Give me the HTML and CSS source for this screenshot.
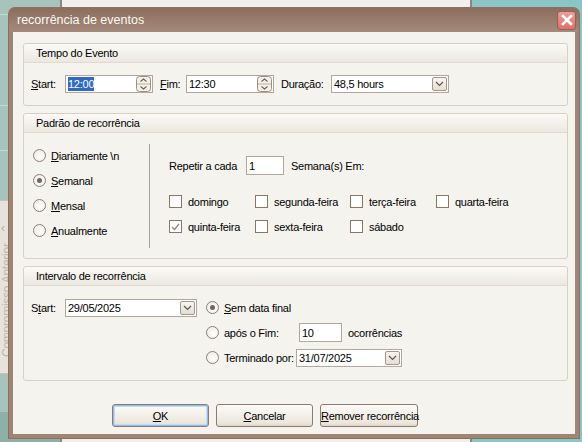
FILE: index.html
```html
<!DOCTYPE html>
<html lang="pt">
<head>
  <meta charset="UTF-8" />
  <title>recorrência de eventos</title>
  <link rel="stylesheet" href="styles.css">
</head>
<body>
  <div class="backdrop">
    <div class="bg-left">
      <div class="prev-tab"><span class="prev-arrow">&lsaquo;</span><span class="prev-text">Compromisso Anterior</span></div>
    </div>
    <div class="bg-main"></div>
    <div class="bg-right"></div>
  </div>

  <div class="dialog">
    <div class="titlebar">
      <span class="title">recorrência de eventos</span>
      <span class="close">
        <svg width="12" height="12" viewBox="0 0 12 12"><path d="M2 2 L10 10 M10 2 L2 10" stroke="#fff" stroke-width="2.6" stroke-linecap="square"/></svg>
      </span>
    </div>

    <div class="body">
      <div class="group g-time">
        <div class="group-head">Tempo do Evento</div>
        <div class="time-row">
          <label class="lbl-start"><u>S</u>tart:</label>
          <div class="field spin">
            <span class="value"><span class="sel">12:00</span></span>
            <svg class="spin-icon" width="15" height="16" viewBox="0 0 15 16">
              <rect x="0.5" y="0.5" width="14" height="15" rx="3" fill="#f3f0ea" stroke="#9c8f82"/>
              <line x1="1" y1="8" x2="14" y2="8" stroke="#b8aea2"/>
              <path d="M4.5 5.5 L7.5 3 L10.5 5.5" fill="none" stroke="#6d6156" stroke-width="1.1"/>
              <path d="M4.5 10.5 L7.5 13 L10.5 10.5" fill="none" stroke="#6d6156" stroke-width="1.1"/>
            </svg>
          </div>
          <label class="lbl-fim"><u>F</u>im:</label>
          <div class="field spin">
            <span class="value">12:30</span>
            <svg class="spin-icon" width="15" height="16" viewBox="0 0 15 16">
              <rect x="0.5" y="0.5" width="14" height="15" rx="3" fill="#f3f0ea" stroke="#9c8f82"/>
              <line x1="1" y1="8" x2="14" y2="8" stroke="#b8aea2"/>
              <path d="M4.5 5.5 L7.5 3 L10.5 5.5" fill="none" stroke="#6d6156" stroke-width="1.1"/>
              <path d="M4.5 10.5 L7.5 13 L10.5 10.5" fill="none" stroke="#6d6156" stroke-width="1.1"/>
            </svg>
          </div>
          <label class="lbl-dur">Duração:</label>
          <div class="field combo dur">
            <span class="value">48,5 hours</span>
            <span class="drop"><svg width="9" height="6" viewBox="0 0 9 6"><path d="M1 1 L4.5 4.5 L8 1" fill="none" stroke="#5e554c" stroke-width="1.2"/></svg></span>
          </div>
        </div>
      </div>

      <div class="group g-pattern">
        <div class="group-head">Padrão de recorrência</div>
        <div class="pattern">
          <div class="radios">
            <div class="opt"><span class="radio"></span><span><u>D</u>iariamente \n</span></div>
            <div class="opt"><span class="radio on"></span><span><u>S</u>emanal</span></div>
            <div class="opt"><span class="radio"></span><span><u>M</u>ensal</span></div>
            <div class="opt"><span class="radio"></span><span><u>A</u>nualmente</span></div>
          </div>
          <div class="sep"></div>
          <div class="weekly">
            <div class="repeat-row">
              <span class="repeat-lbl">Repetir a cada</span>
              <div class="field num"><span class="value">1</span></div>
              <span>Semana(s) Em:</span>
            </div>
            <div class="days">
              <div class="day"><span class="check"></span>domingo</div>
              <div class="day"><span class="check"></span>segunda-feira</div>
              <div class="day"><span class="check"></span>terça-feira</div>
              <div class="day"><span class="check"></span>quarta-feira</div>
              <div class="day"><span class="check on"><svg width="9" height="8" viewBox="0 0 9 8"><path d="M1 4 L3.5 6.5 L8 1" fill="none" stroke="#8a8178" stroke-width="1.2"/></svg></span>quinta-feira</div>
              <div class="day"><span class="check"></span>sexta-feira</div>
              <div class="day"><span class="check"></span>sábado</div>
            </div>
          </div>
        </div>
      </div>

      <div class="group g-range">
        <div class="group-head">Intervalo de recorrência</div>
        <div class="range">
          <div class="range-start">
            <label>S<u>t</u>art:</label>
            <div class="field combo start-date">
              <span class="value">29/05/2025</span>
              <span class="drop"><svg width="9" height="6" viewBox="0 0 9 6"><path d="M1 1 L4.5 4.5 L8 1" fill="none" stroke="#5e554c" stroke-width="1.2"/></svg></span>
            </div>
          </div>
          <div class="range-end">
            <div class="opt"><span class="radio on"></span><span><u>S</u>em data final</span></div>
            <div class="opt"><span class="radio"></span><span class="end-lbl after">após o Fim:</span><div class="field occ"><span class="value">10</span></div><span class="occ-txt">ocorrências</span></div>
            <div class="opt"><span class="radio"></span><span class="end-lbl by">Terminado por:</span><div class="field combo end-date">
              <span class="value">31/07/2025</span>
              <span class="drop"><svg width="9" height="6" viewBox="0 0 9 6"><path d="M1 1 L4.5 4.5 L8 1" fill="none" stroke="#5e554c" stroke-width="1.2"/></svg></span>
            </div></div>
          </div>
        </div>
      </div>

      <div class="buttons">
        <button class="btn default"><u>O</u>K</button>
        <button class="btn"><u>C</u>ancelar</button>
        <button class="btn"><u>R</u>emover recorrência</button>
      </div>
    </div>
  </div>
</body>
</html>
```

FILE: styles.css
```css
html, body {
  margin: 0;
  padding: 0;
  width: 582px;
  height: 442px;
  overflow: hidden;
}
body {
  font-family: "Liberation Sans", Arial, sans-serif;
  font-size: 11px;
  letter-spacing: -0.25px;
  color: #000;
  position: relative;
  white-space: nowrap;
}
.backdrop {
  display: flex;
  height: 442px;
}
.bg-left {
  width: 60px;
  background: #a8c3bb;
  position: relative;
  background-image:
    linear-gradient(#c5d8d2, #c5d8d2),
    linear-gradient(#c5d8d2, #c5d8d2),
    linear-gradient(#c5d8d2, #c5d8d2),
    linear-gradient(#8fb0a7, #8fb0a7);
  background-size: 100% 1px, 100% 1px, 100% 1px, 100% 30px;
  background-position: 0 14px, 0 105px, 0 150px, 0 412px;
  background-repeat: no-repeat;
}
.prev-tab {
  position: absolute;
  left: 0;
  top: 200px;
  width: 18px;
  height: 172px;
  background: #e7e3dc;
  border: 1px solid #c7c1b6;
  border-left: none;
  border-radius: 0 4px 4px 0;
}
.prev-arrow {
  position: absolute;
  left: 1px;
  top: 20px;
  color: #b3aca2;
  font-size: 12px;
}
.prev-text {
  position: absolute;
  left: 0;
  top: 156px;
  transform: rotate(-90deg);
  transform-origin: 0 0;
  color: #bdb7ad;
  font-size: 12px;
}
.bg-main {
  width: 408px;
  background: #f1efeb;
  border-left: 2px solid #8a8780;
  border-right: 2px solid #8a8780;
}
.bg-right {
  flex: 1;
  background: #8ac6c5;
}

/* dialog window */
.dialog {
  position: absolute;
  left: 9px;
  top: 8px;
  width: 570px;
  height: 430px;
  display: flex;
  flex-direction: column;
  background: #a08474;
  border-radius: 6px 6px 0 0;
  box-shadow: 0 0 0 1px #8c6f60;
}
.titlebar {
  height: 24px;
  display: flex;
  align-items: center;
  justify-content: space-between;
  padding: 0 3px 0 8px;
  background: linear-gradient(#8d6d5d, #a48a7b);
  border-radius: 6px 6px 0 0;
}
.title {
  color: #fbf8f5;
  font-size: 12.5px;
  letter-spacing: 0;
}
.close {
  width: 19px;
  height: 19px;
  box-sizing: border-box;
  border: 1px solid #8d6456;
  border-radius: 3px;
  background: linear-gradient(#f09a96, #e06f6b);
  display: flex;
  align-items: center;
  justify-content: center;
}
.body {
  flex: 1;
  margin: 0 4px 4px;
  background: #f5f3ee;
  padding: 11px 7px 0 10px;
  display: flex;
  flex-direction: column;
  gap: 7px;
}

/* group boxes */
.group {
  box-sizing: border-box;
  border: 1px solid #d8d1c3;
  border-radius: 3px;
  background: #f5f3ee;
}
.g-time { height: 63px; }
.g-pattern { height: 146px; }
.g-range { height: 115px; }
.group-head {
  height: 18px;
  line-height: 18px;
  padding-left: 12px;
  background: linear-gradient(#fbfaf7, #ece8e0);
  border-bottom: 1px solid #e1dbcd;
  border-radius: 3px 3px 0 0;
}

/* fields */
.field {
  box-sizing: border-box;
  height: 18px;
  background: #fff;
  border: 1px solid #b3a899;
  display: flex;
  align-items: center;
  padding-left: 1px;
}
.field .value {
  flex: 1;
  padding-left: 1px;
}
.sel {
  background: #316ac5;
  color: #fff;
  padding: 1px 0;
}
.spin { width: 88px; }
.spin-icon { margin-right: 1px; }
.combo .drop {
  width: 15px;
  height: 14px;
  box-sizing: border-box;
  margin-right: 1px;
  border: 1px solid #a3968a;
  border-radius: 2px;
  background: linear-gradient(#f8f6f1, #e4ded3);
  display: flex;
  align-items: center;
  justify-content: center;
}

/* time row */
.time-row {
  display: flex;
  align-items: center;
  padding: 12px 0 0 7px;
}
.lbl-start { width: 34px; }
.lbl-fim { margin-left: 7px; width: 26px; }
.lbl-dur { margin-left: 7px; width: 50px; }
.dur { width: 118px; }

/* pattern */
.pattern {
  display: flex;
  padding: 10px 0 0 9px;
}
.radios { width: 116px; }
.opt {
  display: flex;
  align-items: center;
  height: 25px;
}
.radio {
  width: 13px;
  height: 13px;
  box-sizing: border-box;
  border: 1px solid #8e7f71;
  border-radius: 50%;
  background: radial-gradient(circle at 60% 60%, #fff, #ebe7df);
  margin-right: 5px;
  flex: none;
  display: flex;
  align-items: center;
  justify-content: center;
}
.radio.on::after {
  content: "";
  width: 5px;
  height: 5px;
  border-radius: 50%;
  background: #6f6660;
}
.sep {
  width: 1px;
  height: 104px;
  margin-top: 1px;
  background: #a9a094;
}
.weekly {
  padding-left: 19px;
}
.repeat-row {
  display: flex;
  align-items: center;
  margin-top: 13px;
  height: 19px;
}
.repeat-lbl { width: 70px; }
.num {
  width: 38px;
  height: 19px;
  margin: 0 7px;
}
.days {
  display: grid;
  grid-template-columns: 86px 95px 86px 90px;
  margin-top: 14px;
}
.day {
  display: flex;
  align-items: center;
  height: 25px;
}
.check {
  width: 13px;
  height: 13px;
  box-sizing: border-box;
  border: 1px solid #8a7666;
  background: #fff;
  margin-right: 6px;
  display: flex;
  align-items: center;
  justify-content: center;
}

/* range */
.range {
  display: flex;
  padding: 9px 0 0 7px;
}
.range-start {
  display: flex;
  align-items: center;
  height: 25px;
}
.range-start label { width: 34px; }
.start-date { width: 132px; }
.range-end { margin-left: 9px; }
.end-lbl.after { width: 75px; }
.end-lbl.by { width: 72px; }
.occ {
  width: 43px;
  height: 19px;
}
.occ-txt { margin-left: 6px; }
.end-date { width: 106px; }

/* buttons */
.buttons {
  display: flex;
  gap: 7px;
  margin: 16px 0 0 89px;
}
.btn {
  width: 97px;
  height: 23px;
  padding: 0;
  font-family: "Liberation Sans", Arial, sans-serif;
  font-size: 11px;
  letter-spacing: -0.25px;
  color: #000;
  white-space: nowrap;
  border: 1px solid #8f7a6b;
  border-radius: 3px;
  background: linear-gradient(#fcfbf8, #ece7dd 85%, #ddd6ca);
}
.btn:last-child { width: 98px; }
.btn.default {
  box-shadow: inset 0 0 0 1px #8fbcef, inset 0 0 0 2px #c2dbf6;
}
```
